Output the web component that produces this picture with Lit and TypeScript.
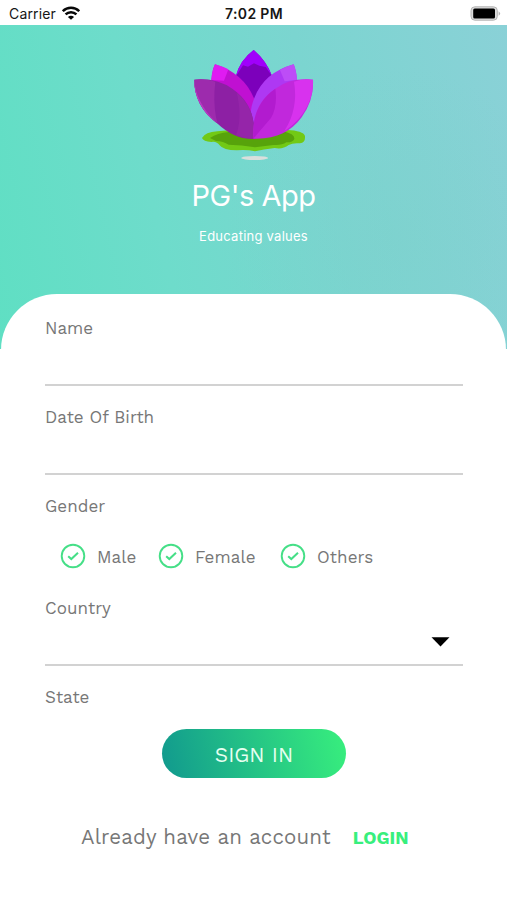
import { LitElement, html, css, svg } from "lit";
import { customElement, property } from "lit/decorators.js";

@customElement("status-bar")
class StatusBar extends LitElement {
  static styles = css`
    :host { display: grid; grid-template-columns: 1fr auto 1fr; align-items: center; height: 25px; background: #fff; color: #161616; font-family: Inter, sans-serif; font-size: 14px; line-height: 20px; padding: 2px 6px 0 9px; box-sizing: border-box; }
    .left { display: flex; align-items: center; gap: 6px; letter-spacing: 0.15px; }
    .time { font-weight: 600; letter-spacing: 0.35px; margin-right: 2px; }
    .battery { justify-self: end; display: block; }
    .wifi { display: block; margin-top: -2px; }
  `;
  render() {
    return html`
      <div class="left"><span>Carrier</span>
        <svg class="wifi" width="18" height="14" viewBox="0 0 18 14" fill="none" stroke="#080808" stroke-width="2.5">
          <path d="M0.8 5.2C5.3 0.7 12.7 0.7 17.2 5.2" />
          <path d="M3.6 8.4C6.5 5.4 11.5 5.4 14.4 8.4" />
          <path d="M9 13.8L5.9 10.9C7.6 9.2 10.4 9.2 12.1 10.9Z" fill="#080808" stroke="none" />
        </svg>
      </div>
      <div class="time">7:02 PM</div>
      <svg class="battery" width="31" height="15" viewBox="0 0 31 15">
        <rect x="1" y="0.8" width="26.3" height="13.4" rx="3.8" fill="#dcdcdc" stroke="#b4b4b4" />
        <rect x="3.2" y="2.6" width="21.8" height="9.8" rx="1.5" fill="#000" />
        <path d="M28.6 5.2q3 2.3 0 4.6z" fill="#b4b4b4" />
      </svg>`;
  }
}

@customElement("lotus-logo")
class LotusLogo extends LitElement {
  static styles = css`:host, svg { display: block; }`;
  render() {
    return html`<svg width="150" height="130" viewBox="0 0 450 390">
      <path d="M66 294Q76 276 112 274L200 266L320 270Q370 272 375 288Q377 308 360 310Q338 308 326 315Q308 329 284 324Q250 328 225 334Q200 328 170 331Q130 331 119 316Q110 303 94 306Q70 304 66 294Z" fill="#72c915" />
      <path d="M90 294Q112 279 146 276L310 274Q345 282 343 297Q338 308 319 307Q305 317 280 315L225 322Q185 315 146 314Q130 304 108 303Z" fill="#57a30b" />
      <path d="M167 110Q180 60 221 30Q259 62 276 108L250 190L222 205L190 180Z" fill="#7c00bb" />
      <path d="M167 110Q180 60 221 30Q259 62 276 108L257 81L238 77L222 70L204 80L189 76Z" fill="#a000fb" />
      <path d="M94 120Q96 92 105 73Q190 99 222 175L226 295L140 230Z" fill="#c010d2" />
      <path d="M94 120Q96 92 105 73Q126 79 145 88L132 122Z" fill="#e01bf2" />
      <path d="M351 120Q349 91 341 73Q252 98 223 174Q205 218 218 245L224 275L320 230Z" fill="#ae38f3" />
      <path d="M351 120Q349 91 341 73Q320 79 300 90L314 124Z" fill="#bd4df7" />
      <path d="M43 119Q110 113 158 147Q212 185 221 249L224 296Q165 300 113 251C66 218 41 167 43 119Z" fill="#8d20a4" />
      <path d="M43 119Q76 115 106 125Q99 180 108 232L113 251C66 218 41 167 43 119Z" fill="#9d2bad" />
      <path d="M43 119Q46 185 108 247C66 216 41 167 43 119Z" fill="#b93bc5" />
      <path d="M170 157Q215 196 221 249L224 296Q197 298 168 286Q188 233 170 157Z" fill="#9525a9" />
      <path d="M399 119Q330 113 286 146C232 182 218 232 220 296C285 299 332 277 365 232Q402 180 399 119Z" fill="#c128dc" />
      <path d="M286 146Q235 181 223 240Q219 263 220 296Q242 270 273 234Q293 199 286 146Z" fill="#b21bcf" />
      <path d="M399 119Q371 115 342 125Q356 205 313 273C370 237 402 178 399 119Z" fill="#d832ee" />
      <ellipse cx="224" cy="354" rx="40" ry="6" fill="#d9dfdc" />
    </svg>`;
  }
}

@customElement("form-field")
class FormField extends LitElement {
  @property() label = "";
  @property({ type: Boolean }) select = false;
  static styles = css`
    :host { display: flex; flex-direction: column; box-sizing: border-box; border-bottom: 2px solid #d2d2d2; color: #777; }
    .label { font-size: 17px; line-height: 20px; letter-spacing: 0.05px; margin-top: -0.5px; }
    .arrow { display: block; align-self: flex-end; margin: 19.5px 13px 0 0; }
  `;
  render() {
    return html`<span class="label">${this.label}</span>
      ${this.select ? html`<svg class="arrow" width="19" height="10"><path d="M0.5 0.3H18.5L9.5 9.6Z" fill="#000" /></svg>` : ""}`;
  }
}

@customElement("app-root")
class AppRoot extends LitElement {
  static styles = css`
    :host { display: flex; flex-direction: column; width: 507px; height: 900px; overflow: hidden; background: #fff; font-family: "Work Sans", Inter, sans-serif; color: #777; }
    .hero { display: flex; flex-direction: column; align-items: center; height: 324px; flex: none; background: radial-gradient(circle at 78% 65%, #7ccfc955, #7ccfc900 38%), linear-gradient(77deg, #5fdfc3 0%, #6edccb 32%, #7bd5d0 63%, #8ad1d7 100%); color: #fff; font-family: Inter, sans-serif; }
    .logo { margin: 15px 0 0 3px; }
    h1 { margin: 8px 0 0; font-weight: 400; font-size: 29px; line-height: 36px; letter-spacing: -0.5px; }
    .tag { margin-top: 13px; font-size: 13px; line-height: 18px; letter-spacing: 0.25px; }
    .card { flex: none; height: 606px; margin: -55px 1px 0; background: #fff; border-radius: 56px 56px 0 0; box-sizing: border-box; padding: 24px 43px 0 44px; display: flex; flex-direction: column; }
    .f1 { height: 68px; margin-bottom: 21px; }
    .f2 { height: 68px; margin-bottom: 21px; }
    .f3 { height: 68px; margin-bottom: 21px; }
    .label { font-size: 17px; line-height: 20px; letter-spacing: 0.05px; }
    .options { display: flex; align-items: center; height: 26px; margin: 27px 0 29px 15px; }
    .option { display: flex; align-items: center; gap: 11px; font-size: 17px; line-height: 20px; letter-spacing: 0.1px; padding-top: 1px; }
    .male { width: 98px; }
    .female { width: 122px; }
    .check { display: block; margin-top: -1px; }
    .button { align-self: center; width: 184px; height: 49px; margin: 22px 0 0 0; padding: 2px 0 0; box-sizing: border-box; border: 0; border-radius: 25px; background: linear-gradient(77deg, #11998e, #38ef7d); color: #e6fff1; font-family: inherit; font-size: 20.8px; }
    .footer { display: flex; align-items: center; gap: 22px; margin: 45px 0 0 36px; line-height: 26px; white-space: nowrap; }
    .ask { font-size: 20.5px; letter-spacing: 0.14px; }
    .login { font-size: 18px; font-weight: 700; color: #38ef7d; padding-top: 2px; }
  `;
  option(name: string) {
    return html`<div class="option ${name.toLowerCase()}">
      <svg class="check" width="26" height="26" viewBox="0 0 26 26" fill="none" stroke="#45df87">
        ${svg`<circle cx="13" cy="13" r="11.3" stroke-width="1.9" /><path d="M8.2 13.2L11.3 16.1L18 9.8" stroke-width="2" />`}
      </svg><span>${name}</span></div>`;
  }
  render() {
    return html`
      <status-bar></status-bar>
      <div class="hero">
        <lotus-logo class="logo"></lotus-logo>
        <h1>PG's App</h1>
        <div class="tag">Educating values</div>
      </div>
      <div class="card">
        <form-field class="f1" label="Name"></form-field>
        <form-field class="f2" label="Date Of Birth"></form-field>
        <span class="label">Gender</span>
        <div class="options">${["Male", "Female", "Others"].map((n) => this.option(n))}</div>
        <form-field class="f3" label="Country" select></form-field>
        <span class="label">State</span>
        <button class="button">SIGN IN</button>
        <div class="footer"><span class="ask">Already have an account</span><span class="login">LOGIN</span></div>
      </div>`;
  }
}
